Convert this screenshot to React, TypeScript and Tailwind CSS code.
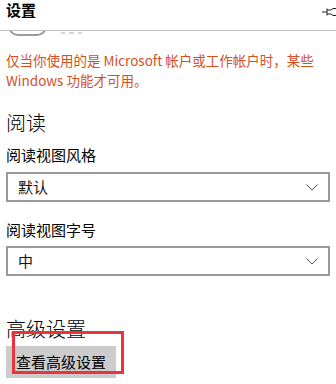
import React from "react";

const font = { fontFamily: '"Segoe UI", "Noto Sans CJK SC", "Noto Sans", sans-serif' };

function Chevron() {
  return (
    <svg width="12" height="7" viewBox="0 0 12 7" fill="none" stroke="#555" strokeWidth="1">
      <path d="M0.5 0.5 L6 6 L11.5 0.5" />
    </svg>
  );
}

function Select({ value }: { value: string }) {
  return (
    <div className="mx-[6px] h-[30px] border-2 border-[#999] flex items-center justify-between pl-[10px] pr-[10px]">
      <span className="text-[15px] text-[#111]">{value}</span>
      <Chevron />
    </div>
  );
}

export default function App() {
  return (
    <div className="w-[336px] h-[384px] bg-white overflow-hidden relative text-black" style={font}>
      <div className="h-[31px] flex justify-between items-start border-b border-[#bdbdbd]">
        <span className="ml-[6px] text-[15px] font-bold leading-[20px]">设置</span>
        <svg className="mt-[7px]" width="14" height="10" viewBox="0 0 14 10" fill="none" stroke="#222" strokeWidth="1">
          <path d="M0 5 H5 M5 1.5 V8.5 M5 3 H9 L11 1.5 H14 M5 7 H9 L11 8.5 H14" />
        </svg>
      </div>
      {/* bottom edge of a toggle scrolled out of view */}
      <div className="h-[5px] overflow-hidden flex items-start gap-[14px]">
        <div className="ml-[8px] mt-[-15px] w-[39px] h-[20px] rounded-full border-2 border-[#9a9a9a]" />
        <div className="flex gap-[4px] mt-[1px]">
          <div className="w-[4px] h-[2px] bg-[#d6d6d6]" />
          <div className="w-[5px] h-[2px] bg-[#d6d6d6]" />
          <div className="w-[4px] h-[2px] bg-[#d6d6d6]" />
        </div>
      </div>

      <p className="mt-[14px] px-[6px] text-[13.5px] leading-[20px] text-[#d4501f]">
        仅当你使用的是 Microsoft 帐户或工作帐户时，某些 Windows 功能才可用。
      </p>

      <h2 className="mt-[21px] px-[6px] text-[20px] leading-[24px] font-light">阅读</h2>
      <div className="mt-[10px] px-[6px] text-[15px] leading-[20px]">阅读视图风格</div>
      <div className="mt-[7px]">
        <Select value="默认" />
      </div>
      <div className="mt-[18px] px-[6px] text-[15px] leading-[20px]">阅读视图字号</div>
      <div className="mt-[6px]">
        <Select value="中" />
      </div>

      <h2 className="mt-[41px] px-[6px] text-[20px] leading-[24px] font-light">高级设置</h2>
      <button className="mt-[5px] ml-[6px] w-[110px] h-[32px] bg-[#cccccc] text-[15px] text-black flex items-center justify-center">
        查看高级设置
      </button>

      <div className="absolute left-[12px] top-[331px] w-[112px] h-[43px] border-[3px] border-[#e8343c]" />
    </div>
  );
}
